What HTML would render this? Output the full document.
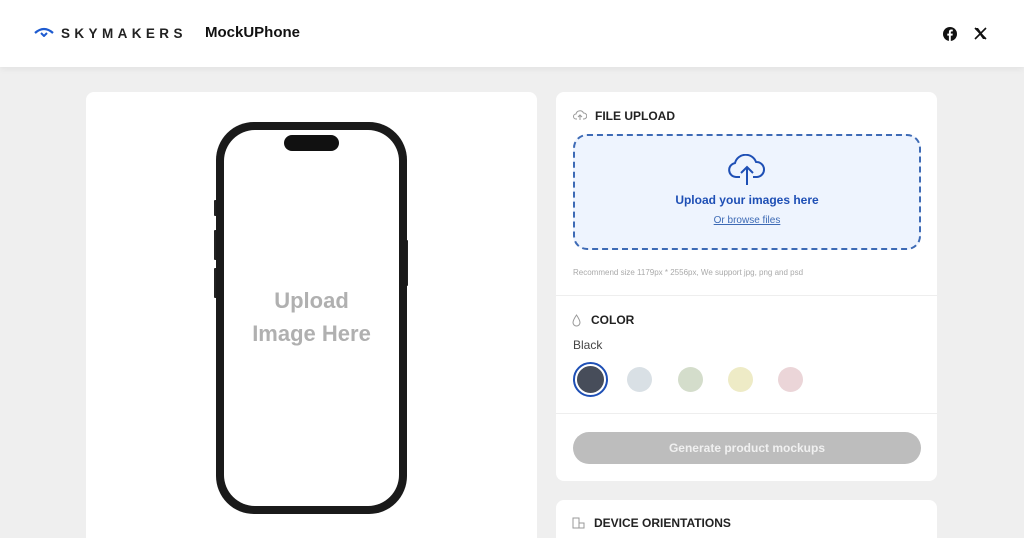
<!DOCTYPE html>
<html><head><style>
*{margin:0;padding:0;box-sizing:border-box}
html,body{width:1024px;height:538px;overflow:hidden}
body{background:#efefef;font-family:"Liberation Sans",sans-serif;position:relative}
.hdr{position:absolute;left:0;top:0;width:1024px;height:67px;background:#fff;box-shadow:0 2px 6px rgba(0,0,0,.06)}
.card{position:absolute;background:#fff;border-radius:8px}
.abs{position:absolute}
.h{font-weight:bold;font-size:12px;color:#222}
.sw{position:absolute;width:25px;height:25px;border-radius:50%;top:367px}
</style></head><body>
<div class="hdr">
<svg class="abs" style="left:34px;top:27px" width="20" height="10" viewBox="0 0 20 10"><path d="M1 6 Q10 -2 19 6" stroke="#1e5bd0" stroke-width="2.2" fill="none"/><path d="M7 6 L10 9 L13 6" stroke="#1e5bd0" stroke-width="2" fill="none"/></svg>
<div class="abs" style="left:61px;top:26px;font-size:13.5px;letter-spacing:4.4px;color:#222;font-weight:bold">SKYMAKERS</div>
<div class="abs" style="left:205px;top:24px;font-size:15px;font-weight:bold;color:#111">MockUPhone</div>
<svg class="abs" style="left:943px;top:27px" width="14" height="14" viewBox="0 0 14 14"><circle cx="7" cy="7" r="7" fill="#111"/><path d="M7.8 14V8.6h1.7l.3-2H7.8V5.4c0-.6.2-1 1-1h1V2.6c-.2 0-.8-.1-1.5-.1-1.5 0-2.4.9-2.4 2.5v1.6H4.3v2h1.6V14z" fill="#fff"/></svg>
<svg class="abs" style="left:974px;top:27px" width="13" height="13" viewBox="0 0 13 13"><path d="M1 1L12 12M12 1L1 12" stroke="#111" stroke-width="1.6"/><path d="M1 1h3l8 11H9z" fill="#111"/></svg>
</div>
<div class="card" style="left:86px;top:92px;width:451px;height:460px"></div>
<div class="abs" style="left:214px;top:200px;width:3px;height:16px;background:#222;border-radius:1px"></div>
<div class="abs" style="left:214px;top:230px;width:3px;height:30px;background:#222;border-radius:1px"></div>
<div class="abs" style="left:214px;top:268px;width:3px;height:30px;background:#222;border-radius:1px"></div>
<div class="abs" style="left:405px;top:240px;width:3px;height:46px;background:#222;border-radius:1px"></div>
<div class="abs" style="left:216px;top:122px;width:191px;height:392px;border-radius:38px;background:#1a1a1a"></div>
<div class="abs" style="left:224px;top:130px;width:175px;height:376px;border-radius:31px;background:#fff"></div>
<div class="abs" style="left:284px;top:135px;width:55px;height:16px;border-radius:8px;background:#111"></div>
<div class="abs" style="left:216px;top:284px;width:191px;text-align:center;font-size:22px;font-weight:bold;color:#b0b0b0;line-height:33px">Upload<br>Image Here</div>

<div class="card" style="left:556px;top:92px;width:381px;height:389px"></div>
<svg class="abs" style="left:573px;top:110px" width="14" height="11" viewBox="0 0 14 11"><path d="M4 9H3a2.5 2.5 0 0 1 0-5 4 4 0 0 1 7.5-1A3 3 0 0 1 11 9h-1M7 10V5M5 7l2-2 2 2" stroke="#999" fill="none"/></svg>
<div class="abs h" style="left:595px;top:109px">FILE UPLOAD</div>
<div class="abs" style="left:573px;top:134px;width:348px;height:116px;border:2px dashed #3d6ab5;border-radius:14px;background:#eef4fe"></div>
<svg class="abs" style="left:727px;top:154px" width="40" height="33" viewBox="0 0 40 33"><path d="M13 23H9a7 7 0 0 1-1-13.9A11 11 0 0 1 29 8a7.5 7.5 0 0 1 1 15h-4" stroke="#1e4fb5" stroke-width="2" fill="none" stroke-linejoin="round"/><path d="M20 31V13M14 19l6-6 6 6" stroke="#1e4fb5" stroke-width="2" fill="none"/></svg>
<div class="abs" style="left:573px;top:193px;width:348px;text-align:center;font-size:12px;font-weight:bold;color:#1e4fb5">Upload your images here</div>
<div class="abs" style="left:573px;top:215px;width:348px;text-align:center;font-size:10px;color:#3d6ab5;text-decoration:underline">Or browse files</div>
<div class="abs" style="left:573px;top:268px;font-size:8px;color:#aaa">Recommend size 1179px * 2556px, We support jpg, png and psd</div>
<div class="abs" style="left:556px;top:295px;width:381px;height:1px;background:#eee"></div>
<svg class="abs" style="left:572px;top:314px" width="9" height="13" viewBox="0 0 9 13"><path d="M4.5 1C2.5 4 1 6.5 1 8.5a3.5 3.5 0 0 0 7 0C8 6.5 6.5 4 4.5 1z" stroke="#999" fill="none"/></svg>
<div class="abs h" style="left:591px;top:313px">COLOR</div>
<div class="abs" style="left:573px;top:338px;font-size:12px;color:#444">Black</div>
<div class="abs" style="left:573px;top:362px;width:35px;height:35px;border-radius:50%;border:2.5px solid #1e4fb5"></div>
<div class="sw" style="left:577px;top:366px;width:27px;height:27px;background:#474d5a"></div>
<div class="sw" style="left:627px;background:#d9e0e5"></div>
<div class="sw" style="left:678px;background:#d4ddcb"></div>
<div class="sw" style="left:728px;background:#eeebc6"></div>
<div class="sw" style="left:778px;background:#ebd5d8"></div>
<div class="abs" style="left:556px;top:413px;width:381px;height:1px;background:#eee"></div>
<div class="abs" style="left:573px;top:432px;width:348px;height:32px;border-radius:16px;background:#bdbdbd;color:#f0f0f0;font-size:12px;font-weight:bold;text-align:center;line-height:32px">Generate product mockups</div>

<div class="card" style="left:556px;top:500px;width:381px;height:60px"></div>
<svg class="abs" style="left:572px;top:517px" width="13" height="12" viewBox="0 0 13 12"><rect x="1" y="1" width="6" height="10" stroke="#999" fill="none"/><rect x="7" y="6" width="5" height="5" stroke="#999" fill="none"/></svg>
<div class="abs h" style="left:594px;top:516px">DEVICE ORIENTATIONS</div>
</body></html>
